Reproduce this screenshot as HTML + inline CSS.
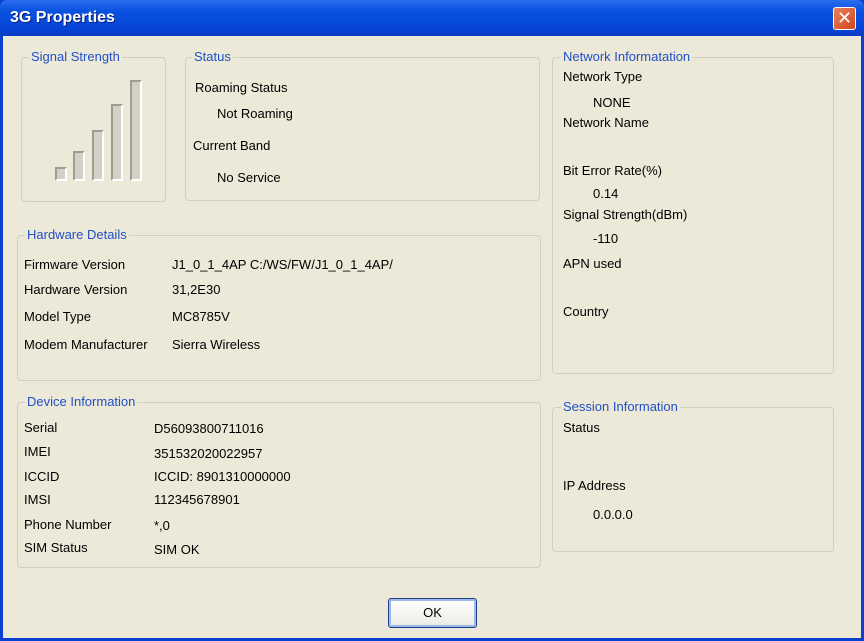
<!DOCTYPE html>
<html><head><style>
*{margin:0;padding:0;box-sizing:border-box}
body{width:864px;height:641px;overflow:hidden;background:#0a3fd0;font-family:"Liberation Sans","DejaVu Sans",sans-serif;font-size:13px;color:#000;position:relative}
#title{position:absolute;left:0;top:0;width:864px;height:36px;background:linear-gradient(#2a6ef0,#0a52e0 30%,#0545d8 80%,#0a3cc0);border-radius:7px 7px 0 0}
#title span{position:absolute;left:10px;top:9px;color:#fff;font-weight:bold;font-size:16px;text-shadow:1px 1px #0a1f80}
#close{position:absolute;left:833px;top:7px;width:23px;height:23px;border:1px solid #fff;border-radius:3px;background:linear-gradient(135deg,#e8805a,#d0451f);color:#fff;font-size:18px;text-align:center;line-height:21px;font-weight:bold}
#body{position:absolute;left:3px;top:36px;width:858px;height:602px;background:#ECE9D8}
.g{position:absolute;border:1px solid #d0d0bf;border-radius:4px}
.gl{position:absolute;background:#ECE9D8;color:#2150c8;padding:0 2px;font-size:13px}
.t{position:absolute;white-space:nowrap}
.bar{position:absolute;background:#d4d0c8;border:2px solid;border-color:#a09d90 #fff #fff #a09d90}
#ok{position:absolute;left:388px;top:598px;width:89px;height:30px;border:1px solid #1f3f8f;border-radius:3px;background:linear-gradient(#fff,#ecebe6);box-shadow:inset 0 0 0 2px #9fb8ea;text-align:center;line-height:28px}
</style></head><body>
<div id="title"><span>3G Properties</span><div id="close">✕</div></div>
<div id="body"></div>
<div class="g" style="left:21px;top:57px;width:145px;height:145px"></div><div class="gl" style="left:29px;top:49px">Signal Strength</div>
<div class="bar" style="left:55px;top:167px;width:12px;height:14px"></div>
<div class="bar" style="left:73px;top:151px;width:12px;height:30px"></div>
<div class="bar" style="left:92px;top:130px;width:12px;height:51px"></div>
<div class="bar" style="left:111px;top:104px;width:12px;height:77px"></div>
<div class="bar" style="left:130px;top:80px;width:12px;height:101px"></div>
<div class="g" style="left:185px;top:57px;width:355px;height:144px"></div><div class="gl" style="left:192px;top:49px">Status</div>
<div class="t" style="left:195px;top:80px">Roaming Status</div>
<div class="t" style="left:217px;top:106px">Not Roaming</div>
<div class="t" style="left:193px;top:138px">Current Band</div>
<div class="t" style="left:217px;top:170px">No Service</div>
<div class="g" style="left:552px;top:57px;width:282px;height:317px"></div><div class="gl" style="left:561px;top:49px">Network Informatation</div>
<div class="t" style="left:563px;top:69px">Network Type</div>
<div class="t" style="left:593px;top:95px">NONE</div>
<div class="t" style="left:563px;top:115px">Network Name</div>
<div class="t" style="left:563px;top:163px">Bit Error Rate(%)</div>
<div class="t" style="left:593px;top:186px">0.14</div>
<div class="t" style="left:563px;top:207px">Signal Strength(dBm)</div>
<div class="t" style="left:593px;top:231px">-110</div>
<div class="t" style="left:563px;top:256px">APN used</div>
<div class="t" style="left:563px;top:304px">Country</div>
<div class="g" style="left:17px;top:235px;width:524px;height:146px"></div><div class="gl" style="left:25px;top:227px">Hardware Details</div>
<div class="t" style="left:24px;top:257px">Firmware Version</div><div class="t" style="left:172px;top:257px">J1_0_1_4AP C:/WS/FW/J1_0_1_4AP/</div>
<div class="t" style="left:24px;top:282px">Hardware Version</div><div class="t" style="left:172px;top:282px">31,2E30</div>
<div class="t" style="left:24px;top:309px">Model Type</div><div class="t" style="left:172px;top:309px">MC8785V</div>
<div class="t" style="left:24px;top:337px">Modem Manufacturer</div><div class="t" style="left:172px;top:337px">Sierra Wireless</div>
<div class="g" style="left:17px;top:402px;width:524px;height:166px"></div><div class="gl" style="left:25px;top:394px">Device Information</div>
<div class="t" style="left:24px;top:420px">Serial</div><div class="t" style="left:154px;top:421px">D56093800711016</div>
<div class="t" style="left:24px;top:444px">IMEI</div><div class="t" style="left:154px;top:446px">351532020022957</div>
<div class="t" style="left:24px;top:469px">ICCID</div><div class="t" style="left:154px;top:469px">ICCID: 8901310000000</div>
<div class="t" style="left:24px;top:492px">IMSI</div><div class="t" style="left:154px;top:492px">112345678901</div>
<div class="t" style="left:24px;top:517px">Phone Number</div><div class="t" style="left:154px;top:518px">*,0</div>
<div class="t" style="left:24px;top:540px">SIM Status</div><div class="t" style="left:154px;top:542px">SIM OK</div>
<div class="g" style="left:552px;top:407px;width:282px;height:145px"></div><div class="gl" style="left:561px;top:399px">Session Information</div>
<div class="t" style="left:563px;top:420px">Status</div>
<div class="t" style="left:563px;top:478px">IP Address</div>
<div class="t" style="left:593px;top:507px">0.0.0.0</div>
<div id="ok">OK</div>
</body></html>
